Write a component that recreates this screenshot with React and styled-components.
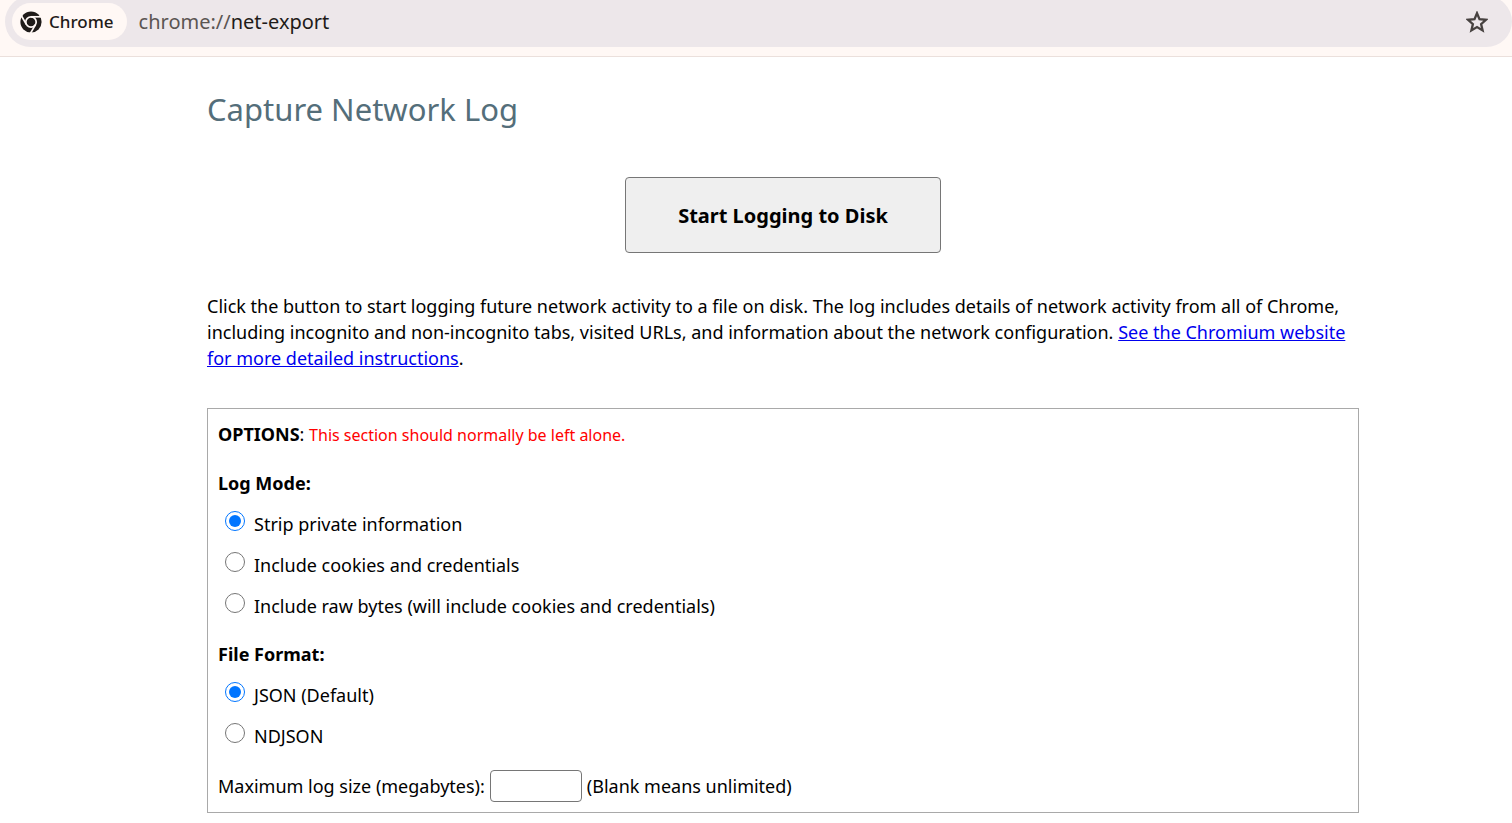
import React from "react";
import styled, { createGlobalStyle } from "styled-components";

const GlobalStyle = createGlobalStyle`
  * { box-sizing: border-box; }
  body {
    margin: 0;
    background: #fff;
    color: #000;
    font-family: "Segoe UI", "Noto Sans", "Open Sans", sans-serif;
    font-size: 18px;
    line-height: 26px;
  }
`;

const Toolbar = styled.header`
  display: flex;
  height: 57px;
  padding: 0 0 9px 5px;
  overflow: hidden;
  background: #fff8f5;
  border-bottom: 1px solid #ebe0dc;
`;

const AddressBar = styled.div`
  flex: 1;
  display: flex;
  align-items: center;
  height: 51px;
  margin-top: -4px;
  padding: 0 24px 0 7px;
  border-radius: 26px;
  background: #ede7ea;
`;

const SiteChip = styled.button`
  display: flex;
  align-items: center;
  gap: 7px;
  height: 37px;
  padding: 0 13px 0 8px;
  border: 0;
  border-radius: 19px;
  background: #fff8f5;
  color: #1f1b19;
  font-family: inherit;
  font-size: 17px;
  font-weight: 500;
`;

const Address = styled.div`
  flex: 1;
  padding-left: 12px;
  font-size: 20px;
  color: #1f1b19;
`;

const Scheme = styled.span`
  color: #5b5553;
`;

const IconButton = styled.button`
  display: flex;
  padding: 0;
  border: 0;
  background: none;
  color: #474240;
`;

const Page = styled.main`
  padding: 32px 153px 10px 207px;
`;

const Title = styled.h1`
  margin: 0;
  color: #546e7a;
  font-size: 31px;
  font-weight: 400;
  line-height: 40px;
`;

const Actions = styled.div`
  display: flex;
  justify-content: center;
  margin: 48px 0 40px;
`;

const StartButton = styled.button`
  width: 316px;
  height: 76px;
  border: 1px solid #767676;
  border-radius: 4px;
  background: #efefef;
  color: #000;
  font-family: inherit;
  font-size: 20px;
  font-weight: 700;
`;

const Intro = styled.p`
  margin: 0 0 37px;
`;

const Link = styled.a`
  color: #0000ee;
`;

const Options = styled.section`
  padding: 12px 10px 10px;
  border: 1px solid #a9a9a9;
`;

const OptionsHeading = styled.div`
  margin-bottom: 22px;
`;

const Warning = styled.span`
  color: #ff0000;
  font-size: 16px;
`;

const Group = styled.fieldset`
  margin: 0;
  padding: 0;
  border: 0;

  & + & {
    margin-top: 15px;
  }
`;

const Legend = styled.legend`
  margin-bottom: 7px;
  padding: 0;
  font-weight: 700;
`;

const Choice = styled.label`
  display: flex;
  align-items: center;
  gap: 9px;
  height: 41px;
  padding-left: 7px;
`;

const Radio = styled.input`
  width: 20px;
  height: 20px;
  margin: 0 0 6px;
`;

const SizeRow = styled.div`
  display: flex;
  align-items: center;
  gap: 5px;
  margin-top: 14px;
`;

const SizeInput = styled.input`
  width: 92px;
  height: 32px;
  border: 1px solid #767676;
  border-radius: 4px;
  font: inherit;
`;

function ChromeIcon() {
  return (
    <svg width="22" height="22" viewBox="0 0 22 22" aria-hidden="true">
      <circle cx="11" cy="11" r="10.6" fill="#1f1b19" />
      <g fill="none" stroke="#fff8f5" strokeWidth="1.7">
        <circle cx="11" cy="11" r="5.2" />
        <path d="M11 5.8H21.5" />
        <path d="M11 5.8H21.5" transform="rotate(120 11 11)" />
        <path d="M11 5.8H21.5" transform="rotate(240 11 11)" />
      </g>
    </svg>
  );
}

function StarIcon() {
  return (
    <svg width="22" height="22" viewBox="0 0 22 22" aria-hidden="true">
      <path
        d="M11 2.2l2.5 6 6.5.6-4.9 4.3 1.5 6.3-5.6-3.4-5.6 3.4 1.5-6.3L2 8.8l6.5-.6z"
        fill="none"
        stroke="currentColor"
        strokeWidth="2.3"
      />
    </svg>
  );
}

function RadioGroup({ title, name, choices }) {
  return (
    <Group>
      <Legend>{title}</Legend>
      {choices.map((text, i) => (
        <Choice key={text}>
          <Radio type="radio" name={name} defaultChecked={i === 0} />
          {text}
        </Choice>
      ))}
    </Group>
  );
}

export default function App() {
  return (
    <>
      <GlobalStyle />
      <Toolbar>
        <AddressBar>
          <SiteChip type="button">
            <ChromeIcon />
            Chrome
          </SiteChip>
          <Address>
            <Scheme>chrome://</Scheme>net-export
          </Address>
          <IconButton type="button" aria-label="Bookmark this tab">
            <StarIcon />
          </IconButton>
        </AddressBar>
      </Toolbar>
      <Page>
        <Title>Capture Network Log</Title>
        <Actions>
          <StartButton type="button">Start Logging to Disk</StartButton>
        </Actions>
        <Intro>
          Click the button to start logging future network activity to a file on disk. The log
          includes details of network activity from all of Chrome, including incognito and
          non-incognito tabs, visited URLs, and information about the network configuration.{" "}
          <Link href="#instructions">
            See the Chromium website for more detailed instructions
          </Link>
          .
        </Intro>
        <Options>
          <OptionsHeading>
            <b>OPTIONS</b>: <Warning>This section should normally be left alone.</Warning>
          </OptionsHeading>
          <RadioGroup
            title="Log Mode:"
            name="log-mode"
            choices={[
              "Strip private information",
              "Include cookies and credentials",
              "Include raw bytes (will include cookies and credentials)",
            ]}
          />
          <RadioGroup
            title="File Format:"
            name="file-format"
            choices={["JSON (Default)", "NDJSON"]}
          />
          <SizeRow>
            <label htmlFor="max-size">Maximum log size (megabytes):</label>
            <SizeInput id="max-size" type="text" />
            <span>(Blank means unlimited)</span>
          </SizeRow>
        </Options>
      </Page>
    </>
  );
}
